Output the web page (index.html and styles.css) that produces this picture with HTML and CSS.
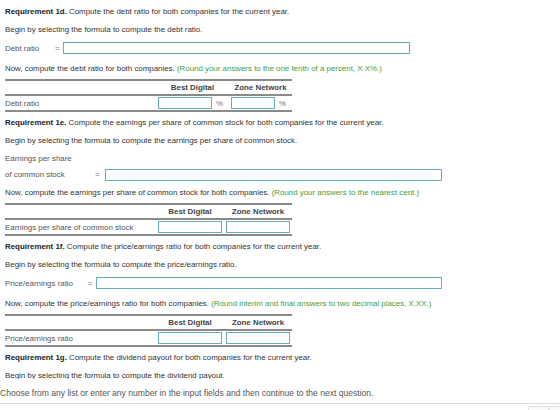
FILE: index.html
```html
<!DOCTYPE html>
<html lang="en">
<head>
    <meta charset="UTF-8">
    <title>Requirement 1d - 1g</title>
    <link rel="stylesheet" href="styles.css">
</head>
<body>
    <div class="question">
        <!-- 1d -->
        <p class="req"><strong>Requirement 1d.</strong> Compute the debt ratio for both companies for the current year.</p>
        <p class="begin">Begin by selecting the formula to compute the debt ratio.</p>
        <div class="formula">
            <span class="f-label lbl-debt">Debt ratio</span>
            <span class="eq eq-debt">=</span>
            <input type="text" class="f-input in-debt">
        </div>
        <p class="now">Now, compute the debt ratio for both companies. <span class="hint">(Round your answers to the one tenth of a percent, X.X%.)</span></p>
        <table class="grid grid-pct">
            <tr class="head">
                <th></th>
                <th>Best Digital</th>
                <th>Zone Network</th>
            </tr>
            <tr>
                <td class="row-label">Debt ratio</td>
                <td><input type="text" class="cell-input"><span class="unit">%</span></td>
                <td><input type="text" class="cell-input cell-narrow"><span class="unit">%</span></td>
            </tr>
        </table>

        <!-- 1e -->
        <p class="req"><strong>Requirement 1e.</strong> Compute the earnings per share of common stock for both companies for the current year.</p>
        <p class="begin">Begin by selecting the formula to compute the earnings per share of common stock.</p>
        <div class="formula formula-tall">
            <span class="f-label lbl-eps">Earnings per share<br>of common stock</span>
            <span class="eq eq-eps">=</span>
            <input type="text" class="f-input in-eps">
        </div>
        <p class="now">Now, compute the earnings per share of common stock for both companies. <span class="hint">(Round your answers to the nearest cent.)</span></p>
        <table class="grid">
            <tr class="head">
                <th></th>
                <th>Best Digital</th>
                <th>Zone Network</th>
            </tr>
            <tr>
                <td class="row-label">Earnings per share of common stock</td>
                <td><input type="text" class="cell-input cell-wide"></td>
                <td><input type="text" class="cell-input cell-wide"></td>
            </tr>
        </table>

        <!-- 1f -->
        <p class="req"><strong>Requirement 1f.</strong> Compute the price/earnings ratio for both companies for the current year.</p>
        <p class="begin">Begin by selecting the formula to compute the price/earnings ratio.</p>
        <div class="formula">
            <span class="f-label lbl-pe">Price/earnings ratio</span>
            <span class="eq eq-pe">=</span>
            <input type="text" class="f-input in-pe">
        </div>
        <p class="now">Now, compute the price/earnings ratio for both companies. <span class="hint">(Round interim and final answers to two decimal places, X.XX.)</span></p>
        <table class="grid">
            <tr class="head">
                <th></th>
                <th>Best Digital</th>
                <th>Zone Network</th>
            </tr>
            <tr>
                <td class="row-label">Price/earnings ratio</td>
                <td><input type="text" class="cell-input cell-wide"></td>
                <td><input type="text" class="cell-input cell-wide"></td>
            </tr>
        </table>

        <!-- 1g -->
        <p class="req"><strong>Requirement 1g.</strong> Compute the dividend payout for both companies for the current year.</p>
        <p class="begin">Begin by selecting the formula to compute the dividend payout.</p>
    </div>

    <div class="footer">
        <p class="footer-text">Choose from any list or enter any number in the input fields and then continue to the next question.</p>
    </div>
    <div class="nav">
        <span class="nav-btn"></span>
        <span class="nav-btn"></span>
    </div>
</body>
</html>
```

FILE: styles.css
```css
body {
    margin: 0;
    font-family: "Liberation Sans", Arial, sans-serif;
    font-size: 7.9px;
    color: #333;
    background-color: #fff;
}
p {
    margin: 0;
}
.question {
    height: 379px;
    overflow: hidden;
    padding: 7px 0 0 5px;
    box-sizing: border-box;
}
.req,
.begin,
.now {
    line-height: 10px;
    white-space: nowrap;
}
.req {
    margin-bottom: 8px;
}
.req strong {
    color: #222;
}
.begin {
    margin-bottom: 7px;
}
.hint {
    color: #3f9e3f;
}
.formula {
    display: flex;
    align-items: center;
    height: 12px;
    margin-bottom: 10px;
    color: #555;
}
.formula-tall {
    height: 32px;
    align-items: flex-end;
    margin-top: -2px;
    margin-bottom: 5px;
}
.formula-tall .f-label {
    line-height: 16px;
}
.formula-tall .eq {
    line-height: 12px;
    margin-bottom: 2px;
}
.formula-tall .f-input {
    margin-bottom: 2px;
}
.f-label {
    display: inline-block;
}
.eq {
    display: inline-block;
    color: #777;
}
.f-input {
    height: 12px;
    box-sizing: border-box;
    border: 1px solid #69aebf;
    padding: 0;
    margin: 0;
    outline: none;
}
.lbl-debt { width: 50px; }
.eq-debt { width: 8px; }
.in-debt { width: 347px; }
.lbl-eps { width: 90px; }
.eq-eps { width: 10px; }
.in-eps { width: 337px; }
.lbl-pe { width: 83px; }
.eq-pe { width: 8px; }
.in-pe { width: 346px; }

.now {
    margin-bottom: 5px;
}
.grid {
    border-collapse: separate;
    border-spacing: 0;
    border-top: 2px solid #8a8a8a;
    border-bottom: 2px solid #8a8a8a;
    margin-bottom: 6px;
    width: 287px;
    table-layout: fixed;
}
.grid th,
.grid td {
    padding: 0;
}
.grid th:first-child,
.grid td:first-child {
    width: 151px;
}
.grid .head th {
    height: 13px;
    border-bottom: 2px solid #8a8a8a;
    font-weight: bold;
    color: #444;
    text-align: center;
}
.grid-pct th:nth-child(2) { width: 73px; }
.grid td {
    height: 14px;
    vertical-align: middle;
}
.row-label {
    color: #555;
    white-space: nowrap;
}
.cell-input {
    height: 12px;
    box-sizing: border-box;
    border: 1px solid #69aebf;
    padding: 0;
    margin: 0 0 0 2px;
    vertical-align: middle;
    outline: none;
    width: 54px;
}
.cell-narrow {
    width: 44px;
    margin-left: 2px;
}
.cell-wide {
    width: 64px;
}
.unit {
    color: #777;
    margin-left: 4px;
    vertical-align: middle;
}
.footer {
    height: 24px;
    border-bottom: 1px solid #ddd;
    display: flex;
    align-items: center;
}
.footer-text {
    font-size: 8.55px;
    color: #555;
    white-space: nowrap;
    margin-top: 3px;
}
.nav {
    display: flex;
    justify-content: flex-end;
    padding-top: 2px;
}
.nav-btn {
    display: inline-block;
    width: 19px;
    height: 14px;
    border: 1px solid #e2e2e2;
    border-radius: 2px;
    background-color: #fafafa;
}
.nav-btn + .nav-btn {
    width: 10px;
    border-right: none;
}
```
